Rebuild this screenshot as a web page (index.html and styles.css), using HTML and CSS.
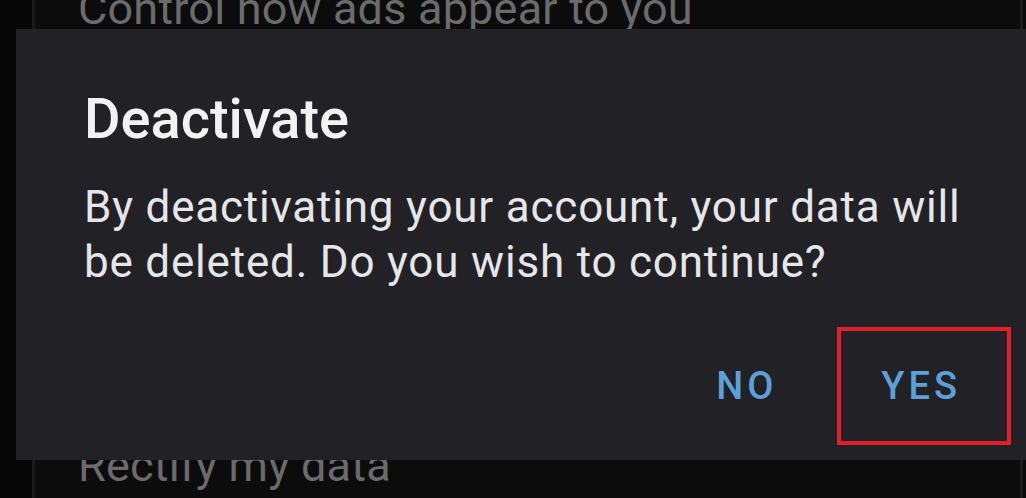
FILE: index.html
```html
<!DOCTYPE html>
<html lang="en">
<head>
<meta charset="utf-8">
<title>Deactivate</title>
<link rel="stylesheet" href="styles.css">
</head>
<body>
<div class="screen">
  <div class="gutter"></div>
  <div class="panel">
    <ul class="settings">
      <li class="item">Control how ads appear to you</li>
      <li class="item">Rectify my data</li>
    </ul>
  </div>
  <div class="edge"></div>
</div>
<div class="dialog" role="dialog" aria-labelledby="dlg-title">
  <h2 class="dialog-title" id="dlg-title">Deactivate</h2>
  <p class="dialog-text">By deactivating your account, your data will be deleted. Do you wish to continue?</p>
  <div class="dialog-actions">
    <button class="btn">NO</button>
    <button class="btn btn-marked">YES</button>
  </div>
</div>
</body>
</html>
```
FILE: styles.css
```css
html, body {
  margin: 0;
  padding: 0;
}
body {
  width: 1026px;
  height: 498px;
  overflow: hidden;
  position: relative;
  background: #070707;
  font-family: Roboto, "Noto Sans", sans-serif;
}
.screen {
  display: flex;
  height: 100%;
}
.gutter {
  width: 32px;
  background: #070707;
}
.panel {
  flex: 1;
  background: #0c0c0d;
  border-left: 3px solid #1b1b1c;
  border-right: 3px solid #1b1b1c;
}
.edge {
  width: 3px;
  background: #0a0a0a;
}
.settings {
  list-style: none;
  margin: -18px 0 0;
  padding: 0 0 0 43px;
  display: flex;
  flex-direction: column;
  gap: 404px;
}
.item {
  font-size: 45px;
  letter-spacing: 0.2px;
  color: #6b6b6c;
  line-height: normal;
  white-space: nowrap;
}
.dialog {
  position: absolute;
  left: 16px;
  top: 29px;
  width: 1040px;
  height: 431px;
  box-sizing: border-box;
  background: #212126;
  padding: 57px 45px 15px 68px;
  display: flex;
  flex-direction: column;
}
.dialog-title {
  margin: 0;
  font-size: 56px;
  font-weight: 500;
  line-height: normal;
  color: #f2f2f3;
}
.dialog-text {
  margin: 28px 0 0;
  max-width: 900px;
  font-size: 44px;
  line-height: 55px;
  color: #e6e6e8;
  letter-spacing: 0.8px;
}
.dialog-actions {
  margin-top: auto;
  display: flex;
  justify-content: flex-end;
  align-items: center;
  gap: 10px;
}
.btn {
  height: 118px;
  box-sizing: border-box;
  padding: 0 46px 0 40px;
  border: 4px solid transparent;
  background: none;
  font-family: inherit;
  font-size: 38px;
  font-weight: 500;
  letter-spacing: 4px;
  color: #5d9fd8;
}
.btn-marked {
  border-color: #e3202a;
}
```
